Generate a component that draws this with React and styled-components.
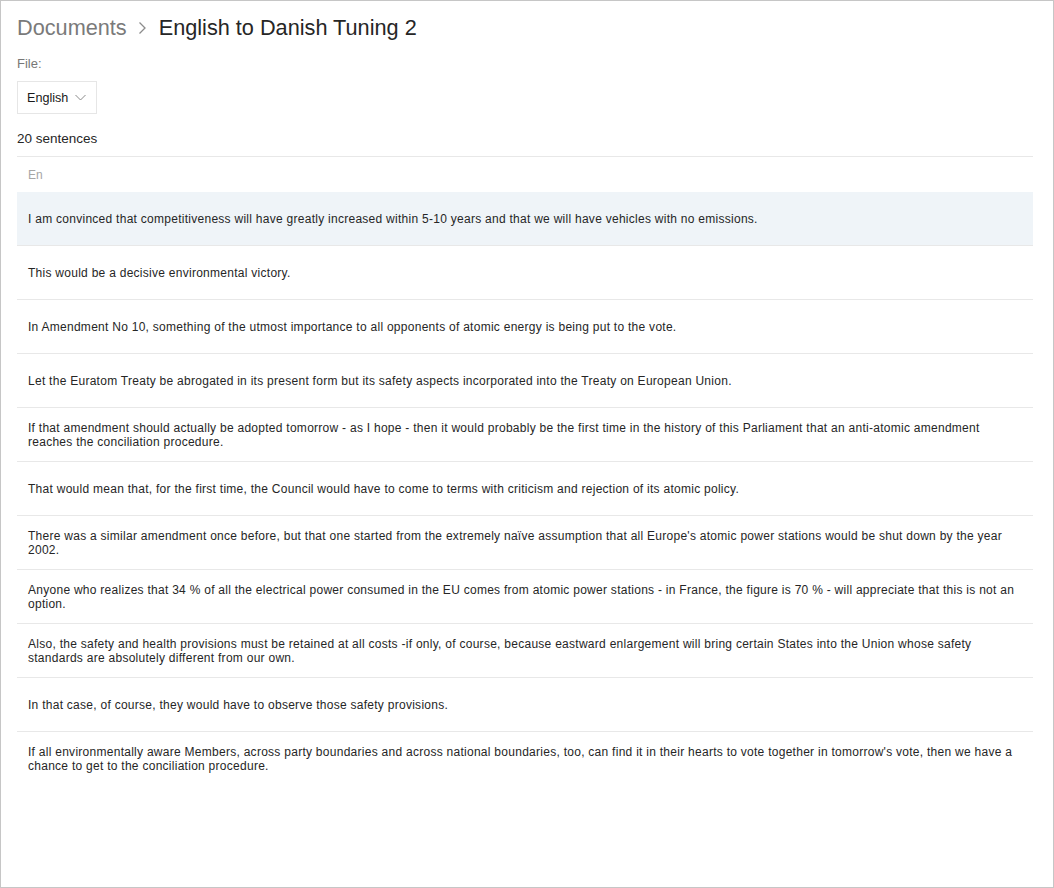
import React from "react";
import styled, { createGlobalStyle } from "styled-components";

const Global = createGlobalStyle`
  html, body { margin: 0; padding: 0; background: #fff; }
  body { font-family: "Liberation Sans", Arial, sans-serif; }
  * { box-sizing: border-box; }
`;

const Frame = styled.div`
  width: 1054px;
  height: 888px;
  border: 1px solid #c6c6c6;
  padding: 12px 20px 0 16px;
  overflow: hidden;
  background: #fff;
`;

const Breadcrumb = styled.div`
  display: flex;
  align-items: center;
  height: 30px;
  font-size: 21.7px;
  line-height: 30px;
`;

const Crumb = styled.span`
  color: ${(p) => (p.$current ? "#262626" : "#7a7a7a")};
`;

const Sep = styled.span`
  display: inline-flex;
  align-items: center;
  margin: 0 12px 0 11px;
  color: #8c8c8c;
`;

const Label = styled.div`
  margin-top: 12px;
  font-size: 13px;
  line-height: 18px;
  color: #777;
`;

const Select = styled.button`
  margin-top: 8px;
  height: 33px;
  display: inline-flex;
  align-items: center;
  gap: 7px;
  padding: 0 10px 0 9px;
  border: 1px solid #e6e6e6;
  background: #fff;
  font-family: inherit;
  font-size: 12.6px;
  color: #1a1a1a;
  border-radius: 0;
`;

const Count = styled.div`
  margin-top: 15px;
  font-size: 13.5px;
  line-height: 20px;
  color: #262626;
`;

const Table = styled.div`
  margin-top: 7px;
  border-top: 1px solid #e8e8e8;
`;

const HeaderRow = styled.div`
  height: 35px;
  display: flex;
  align-items: center;
  padding: 0 11px;
  font-size: 12px;
  color: #a6a6a6;
`;

const Row = styled.div`
  height: 54px;
  display: flex;
  align-items: center;
  padding: 0 11px;
  font-size: 12px;
  letter-spacing: 0.27px;
  line-height: 14px;
  color: #262626;
  background: ${(p) => (p.$active ? "#eff4f8" : "#fff")};
  border-bottom: ${(p) => (p.$last ? "none" : "1px solid #e8e8e8")};
`;

const sentences = [
  "I am convinced that competitiveness will have greatly increased within 5-10 years and that we will have vehicles with no emissions.",
  "This would be a decisive environmental victory.",
  "In Amendment No 10, something of the utmost importance to all opponents of atomic energy is being put to the vote.",
  "Let the Euratom Treaty be abrogated in its present form but its safety aspects incorporated into the Treaty on European Union.",
  "If that amendment should actually be adopted tomorrow - as I hope - then it would probably be the first time in the history of this Parliament that an anti-atomic amendment reaches the conciliation procedure.",
  "That would mean that, for the first time, the Council would have to come to terms with criticism and rejection of its atomic policy.",
  "There was a similar amendment once before, but that one started from the extremely naïve assumption that all Europe's atomic power stations would be shut down by the year 2002.",
  "Anyone who realizes that 34 % of all the electrical power consumed in the EU comes from atomic power stations - in France, the figure is 70 % - will appreciate that this is not an option.",
  "Also, the safety and health provisions must be retained at all costs -if only, of course, because eastward enlargement will bring certain States into the Union whose safety standards are absolutely different from our own.",
  "In that case, of course, they would have to observe those safety provisions.",
  "If all environmentally aware Members, across party boundaries and across national boundaries, too, can find it in their hearts to vote together in tomorrow's vote, then we have a chance to get to the conciliation procedure.",
];

export default function App() {
  return (
    <>
      <Global />
      <Frame>
        <Breadcrumb>
          <Crumb>Documents</Crumb>
          <Sep>
            <svg width="9" height="14" viewBox="0 0 9 14" fill="none">
              <path d="M1.5 1.5 L7 7 L1.5 12.5" stroke="currentColor" strokeWidth="1.3" />
            </svg>
          </Sep>
          <Crumb $current>English to Danish Tuning 2</Crumb>
        </Breadcrumb>
        <Label>File:</Label>
        <Select>
          English
          <svg width="11" height="7" viewBox="0 0 11 7" fill="none">
            <path d="M0.5 1 L5.5 6 L10.5 1" stroke="#8a8a8a" strokeWidth="1" />
          </svg>
        </Select>
        <Count>20 sentences</Count>
        <Table>
          <HeaderRow>En</HeaderRow>
          {sentences.map((s, i) => (
            <Row key={i} $active={i === 0} $last={i === sentences.length - 1}>
              {s}
            </Row>
          ))}
        </Table>
      </Frame>
    </>
  );
}
